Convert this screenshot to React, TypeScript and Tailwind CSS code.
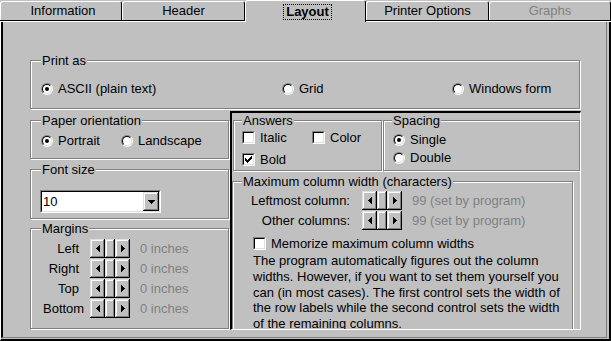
import React from "react";

const RAISED =
  "bg-[#c0c0c0] shadow-[inset_-1px_-1px_0_#000,inset_1px_1px_0_#dfdfdf,inset_-2px_-2px_0_#808080,inset_2px_2px_0_#fff]";

function ArrowL() {
  return (
    <svg width="4" height="7" viewBox="0 0 4 7" shapeRendering="crispEdges">
      <path d="M3 0h1v7h-1z M2 1h1v5h-1z M1 2h1v3h-1z M0 3h1v1h-1z" fill="#000" />
    </svg>
  );
}
function ArrowR() {
  return (
    <svg width="4" height="7" viewBox="0 0 4 7" shapeRendering="crispEdges">
      <path d="M0 0h1v7h-1z M1 1h1v5h-1z M2 2h1v3h-1z M3 3h1v1h-1z" fill="#000" />
    </svg>
  );
}
function ArrowD() {
  return (
    <svg width="7" height="4" viewBox="0 0 7 4" shapeRendering="crispEdges">
      <path d="M0 0h7v1h-7z M1 1h5v1h-5z M2 2h3v1h-3z M3 3h1v1h-1z" fill="#000" />
    </svg>
  );
}

function Radio({ checked = false }: { checked?: boolean }) {
  return (
    <span className="inline-flex h-[12px] w-[12px] shrink-0 rounded-full border border-t-[#808080] border-l-[#808080] border-r-white border-b-white">
      <span className="flex h-full w-full items-center justify-center rounded-full border border-t-black border-l-black border-r-[#dfdfdf] border-b-[#dfdfdf] bg-white">
        {checked && <span className="h-[4px] w-[4px] rounded-full bg-black" />}
      </span>
    </span>
  );
}

function Check({ checked = false }: { checked?: boolean }) {
  return (
    <span className="inline-flex h-[13px] w-[13px] shrink-0 border border-t-[#808080] border-l-[#808080] border-r-white border-b-white">
      <span className="flex h-full w-full items-center justify-center border border-t-black border-l-black border-r-[#dfdfdf] border-b-[#dfdfdf] bg-white">
        {checked && (
          <svg width="7" height="7" viewBox="0 0 7 7" shapeRendering="crispEdges">
            <path
              d="M6 0h1v1h-1z M5 1h2v1h-2z M0 2h1v1h-1z M4 2h3v1h-3z M0 3h2v1h-2z M3 3h3v1h-3z M0 4h5v1h-5z M1 5h3v1h-3z M2 6h1v1h-1z"
              fill="#000"
            />
          </svg>
        )}
      </span>
    </span>
  );
}

function RadioItem({ label, checked, className = "" }: { label: string; checked?: boolean; className?: string }) {
  return (
    <div className={`flex items-center gap-[5px] whitespace-nowrap ${className}`}>
      <Radio checked={checked} />
      <span>{label}</span>
    </div>
  );
}

function CheckItem({ label, checked, className = "" }: { label: string; checked?: boolean; className?: string }) {
  return (
    <div className={`flex items-center gap-[5px] whitespace-nowrap ${className}`}>
      <Check checked={checked} />
      <span>{label}</span>
    </div>
  );
}

function Group({
  label,
  labelLeft,
  className = "",
  children,
}: {
  label: string;
  labelLeft: string;
  className?: string;
  children?: React.ReactNode;
}) {
  return (
    <div
      className={`relative shrink-0 border border-[#808080] shadow-[inset_1px_1px_0_#fff,1px_1px_0_#fff] ${className}`}
    >
      <span className={`absolute top-[-8px] whitespace-nowrap bg-[#c0c0c0] px-[1px] ${labelLeft}`}>{label}</span>
      {children}
    </div>
  );
}

function Spinner() {
  return (
    <div className="flex h-[19px] w-[40px] shrink-0">
      <div className={`flex w-[15px] items-center justify-center ${RAISED}`}>
        <ArrowL />
      </div>
      <div className={`w-[10px] ${RAISED}`} />
      <div className={`flex w-[15px] items-center justify-center ${RAISED}`}>
        <ArrowR />
      </div>
    </div>
  );
}

function Tab({ w, label, disabled, pad = "" }: { w: string; label: string; disabled?: boolean; pad?: string }) {
  return (
    <div className={`flex h-[22px] shrink-0 flex-col ${w}`}>
      <div
        className={`mt-[1px] flex h-[19px] items-center justify-center whitespace-nowrap rounded-t-[3px] border-t border-l border-r border-t-white border-l-white border-r-black pb-[2px] ${pad} ${
          disabled ? "text-[#808080]" : ""
        }`}
      >
        {label}
      </div>
      <div className="h-[1px] bg-black" />
      <div className="h-[1px] bg-white" />
    </div>
  );
}

function MarginRow({ label }: { label: string }) {
  return (
    <div className="flex h-[20px] items-center">
      <span className="ml-[12px] w-[36px] shrink-0 whitespace-nowrap text-right">{label}</span>
      <div className="ml-[11px]">
        <Spinner />
      </div>
      <span className="ml-[10px] whitespace-nowrap text-[#808080]">0 inches</span>
    </div>
  );
}

function ColRow({ label }: { label: string }) {
  return (
    <div className="flex h-[20px] items-center">
      <span className="w-[117px] shrink-0 whitespace-nowrap text-right">{label}</span>
      <div className="ml-[12px]">
        <Spinner />
      </div>
      <span className="ml-[10px] whitespace-nowrap text-[#808080]">99 (set by program)</span>
    </div>
  );
}

export default function App() {
  return (
    <div className="h-[341px] w-[611px] overflow-hidden bg-[#c0c0c0] font-['Liberation_Sans',Arial,sans-serif] text-[13px] leading-[15px] text-black">
      {/* Tabs */}
      <div className="flex h-[22px]">
        <Tab w="w-[122px]" label="Information" pad="pl-[4px]" />
        <Tab w="w-[123px]" label="Header" />
        <div className="flex h-[22px] w-[121px] shrink-0 justify-center rounded-t-[3px] border-t border-l border-r border-t-white border-l-white border-r-black pl-[4px] pt-[3px]">
          <span className="h-[16px] border border-dotted border-black px-[2px] font-bold leading-[14px]">Layout</span>
        </div>
        <Tab w="w-[123px]" label="Printer Options" />
        <Tab w="w-[122px]" label="Graphs" disabled />
      </div>

      {/* Panel */}
      <div className="h-[319px] border-l border-r-2 border-b-2 border-l-white border-r-black border-b-black pr-[2px] pb-[1px]">
        <div className="h-full border-l-2 border-r border-b border-l-black border-r-[#808080] border-b-[#808080] pl-[27px] pt-[38px]">
          <Group label="Print as" labelLeft="left-[10px]" className="h-[49px] w-[550px]">
            <div className="ml-[10px] mt-[20px] flex h-[15px] items-center">
              <RadioItem label="ASCII (plain text)" checked className="w-[241px]" />
              <RadioItem label="Grid" className="w-[170px]" />
              <RadioItem label="Windows form" />
            </div>
          </Group>

          <div className="mt-[2px] flex">
            {/* Left column */}
            <div className="flex w-[199px] shrink-0 flex-col">
              <Group label="Paper orientation" labelLeft="left-[10px]" className="mt-[9px] h-[39px]">
                <div className="ml-[10px] mt-[12px] flex h-[15px] items-center">
                  <RadioItem label="Portrait" checked className="w-[80px]" />
                  <RadioItem label="Landscape" />
                </div>
              </Group>

              <Group label="Font size" labelLeft="left-[10px]" className="mt-[10px] h-[50px]">
                <div className="ml-[9px] mt-[20px] flex h-[23px] w-[121px] border border-t-[#808080] border-l-[#808080] border-r-white border-b-white">
                  <div className="flex flex-1 border border-t-black border-l-black border-r-[#dfdfdf] border-b-[#dfdfdf] bg-white">
                    <span className="flex-1 self-center pl-[1px]">10</span>
                    <div className={`flex w-[16px] items-center justify-center ${RAISED}`}>
                      <ArrowD />
                    </div>
                  </div>
                </div>
              </Group>

              <Group label="Margins" labelLeft="left-[10px]" className="mt-[9px] h-[101px]">
                <div className="mt-[9px] flex flex-col">
                  <MarginRow label="Left" />
                  <MarginRow label="Right" />
                  <MarginRow label="Top" />
                  <MarginRow label="Bottom" />
                </div>
              </Group>
            </div>

            {/* Right sunken frame */}
            <div className="ml-[1px] h-[219px] w-[351px] shrink-0 overflow-hidden border-t-2 border-l-2 border-r border-b border-t-black border-l-black border-r-white border-b-white">
              <div className="mt-[7px] flex">
                <Group label="Answers" labelLeft="left-[8px]" className="ml-[1px] h-[51px] w-[149px]">
                  <div className="ml-[8px] mt-[9px] flex h-[15px] items-center">
                    <CheckItem label="Italic" className="w-[70px]" />
                    <CheckItem label="Color" />
                  </div>
                  <div className="ml-[8px] mt-[7px] flex h-[15px] items-center">
                    <CheckItem label="Bold" checked />
                  </div>
                </Group>
                <Group label="Spacing" labelLeft="left-[8px]" className="ml-[1px] h-[51px] w-[197px]">
                  <div className="ml-[9px] mt-[11px] flex h-[15px] items-center">
                    <RadioItem label="Single" checked />
                  </div>
                  <div className="ml-[9px] mt-[3px] flex h-[15px] items-center">
                    <RadioItem label="Double" />
                  </div>
                </Group>
              </div>

              <Group
                label="Maximum column width (characters)"
                labelLeft="left-[9px]"
                className="mt-[10px] h-[170px] w-[341px]"
              >
                <div className="mt-[8px] flex flex-col">
                  <ColRow label="Leftmost column:" />
                  <ColRow label="Other columns:" />
                </div>
                <div className="ml-[20px] mt-[6px] flex h-[15px] items-center">
                  <CheckItem label="Memorize maximum column widths" />
                </div>
                <p className="ml-[20px] mt-[2px] whitespace-nowrap leading-[15.75px]">
                  The program automatically figures out the column
                  <br />
                  widths. However, if you want to set them yourself you
                  <br />
                  can (in most cases). The first control sets the width of
                  <br />
                  the row labels while the second control sets the width
                  <br />
                  of the remaining columns.
                </p>
              </Group>
            </div>
          </div>
        </div>
      </div>
    </div>
  );
}
